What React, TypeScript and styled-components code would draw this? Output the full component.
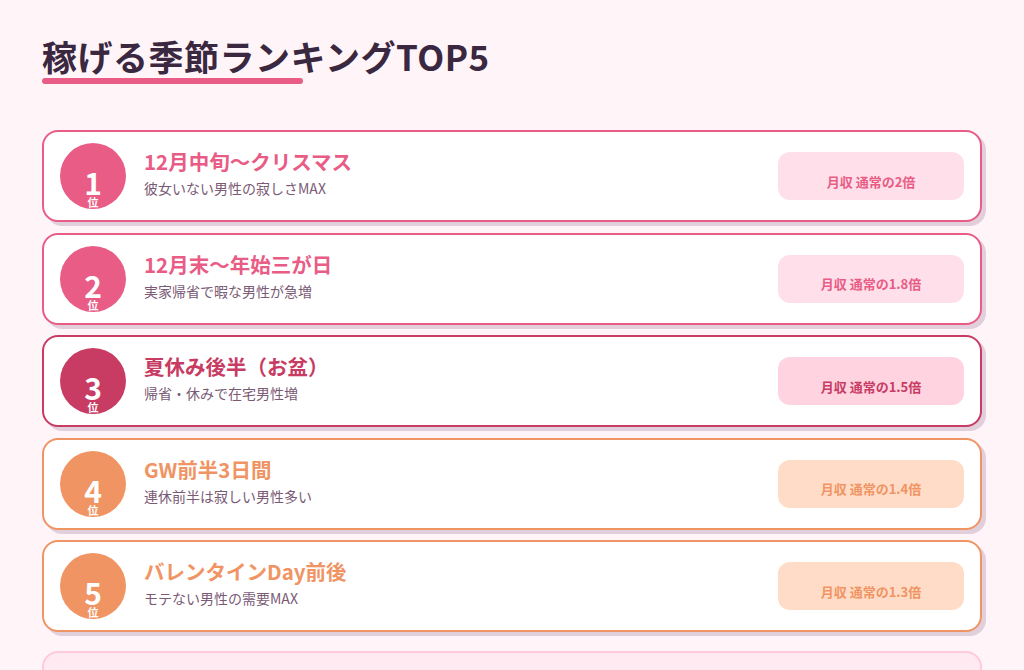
import React from "react";
import styled, { createGlobalStyle } from "styled-components";

const Global = createGlobalStyle`
  html, body {
    margin: 0;
    padding: 0;
    background: #fff4f8;
    overflow: hidden;
  }
  body {
    font-family: "Noto Sans CJK JP", "Noto Sans", sans-serif;
    color: #3a2740;
  }
`;

type Tone = "pink" | "deep" | "orange";

const palette: Record<Tone, { main: string; soft: string }> = {
  pink: { main: "#e85c85", soft: "#ffe0ea" },
  deep: { main: "#c83b63", soft: "#ffd3e0" },
  orange: { main: "#f09463", soft: "#ffdcc7" },
};

const Page = styled.div`
  padding: 32px 42px 0 42px;
  width: 1024px;
  height: 670px;
  overflow: hidden;
  box-sizing: border-box;
`;

const Heading = styled.div`
  display: inline-flex;
  flex-direction: column;
  align-items: flex-start;
`;

const Title = styled.h2`
  margin: 0;
  font-size: 35px;
  font-weight: 700;
  line-height: 47px;
  letter-spacing: 0.5px;
  color: #3a2740;
`;

const Underline = styled.div`
  width: 261px;
  height: 6px;
  border-radius: 3px;
  background: #e85c85;
  margin-top: -1px;
`;

const List = styled.div`
  width: 940px;
  display: flex;
  flex-direction: column;
  gap: 10.5px;
  margin-top: 46px;
`;

const Card = styled.div<{ $tone: Tone }>`
  display: flex;
  align-items: center;
  gap: 18px;
  padding: 11px 16px 11px 16px;
  background: #ffffff;
  border: 2px solid ${(p) => palette[p.$tone].main};
  border-radius: 16px;
  box-shadow: 4px 4px 0 #e2cfdc;
`;

const Circle = styled.div<{ $tone: Tone }>`
  flex: none;
  width: 66px;
  height: 66px;
  border-radius: 50%;
  background: ${(p) => palette[p.$tone].main};
  color: #ffffff;
  display: flex;
  flex-direction: column;
  align-items: center;
  justify-content: flex-end;
  padding-bottom: 1px;
  box-sizing: border-box;
`;

const Rank = styled.span`
  font-size: 30px;
  font-weight: 700;
  line-height: 27px;
`;

const RankUnit = styled.span`
  font-size: 11px;
  font-weight: 700;
  line-height: 12px;
`;

const Body = styled.div`
  flex: 1;
  display: flex;
  flex-direction: column;
  gap: 4px;
  padding-bottom: 6px;
`;

const Season = styled.div<{ $tone: Tone }>`
  font-size: 20.5px;
  font-weight: 700;
  line-height: 26px;
  color: ${(p) => palette[p.$tone].main};
`;

const Reason = styled.div`
  font-size: 14px;
  line-height: 20px;
  color: #7a5a75;
`;

const Badge = styled.div<{ $tone: Tone }>`
  flex: none;
  width: 186px;
  height: 48px;
  border-radius: 12px;
  background: ${(p) => palette[p.$tone].soft};
  color: ${(p) => palette[p.$tone].main};
  font-size: 13px;
  font-weight: 700;
  display: flex;
  align-items: center;
  justify-content: center;
  padding-top: 10px;
  box-sizing: border-box;
`;

const Note = styled.div`
  margin-top: 8px;
  height: 120px;
  border: 2px solid #ffc9dc;
  border-radius: 16px;
  background: #ffeaf2;
`;

const items: { rank: number; season: string; reason: string; rate: string; tone: Tone }[] = [
  { rank: 1, season: "12月中旬〜クリスマス", reason: "彼女いない男性の寂しさMAX", rate: "月収 通常の2倍", tone: "pink" },
  { rank: 2, season: "12月末〜年始三が日", reason: "実家帰省で暇な男性が急増", rate: "月収 通常の1.8倍", tone: "pink" },
  { rank: 3, season: "夏休み後半（お盆）", reason: "帰省・休みで在宅男性増", rate: "月収 通常の1.5倍", tone: "deep" },
  { rank: 4, season: "GW前半3日間", reason: "連休前半は寂しい男性多い", rate: "月収 通常の1.4倍", tone: "orange" },
  { rank: 5, season: "バレンタインDay前後", reason: "モテない男性の需要MAX", rate: "月収 通常の1.3倍", tone: "orange" },
];

export default function App() {
  return (
    <>
      <Global />
      <Page>
        <Heading>
          <Title>稼げる季節ランキングTOP5</Title>
          <Underline />
        </Heading>
        <List>
          {items.map((it) => (
            <Card key={it.rank} $tone={it.tone}>
              <Circle $tone={it.tone}>
                <Rank>{it.rank}</Rank>
                <RankUnit>位</RankUnit>
              </Circle>
              <Body>
                <Season $tone={it.tone}>{it.season}</Season>
                <Reason>{it.reason}</Reason>
              </Body>
              <Badge $tone={it.tone}>{it.rate}</Badge>
            </Card>
          ))}
          <Note />
        </List>
      </Page>
    </>
  );
}
